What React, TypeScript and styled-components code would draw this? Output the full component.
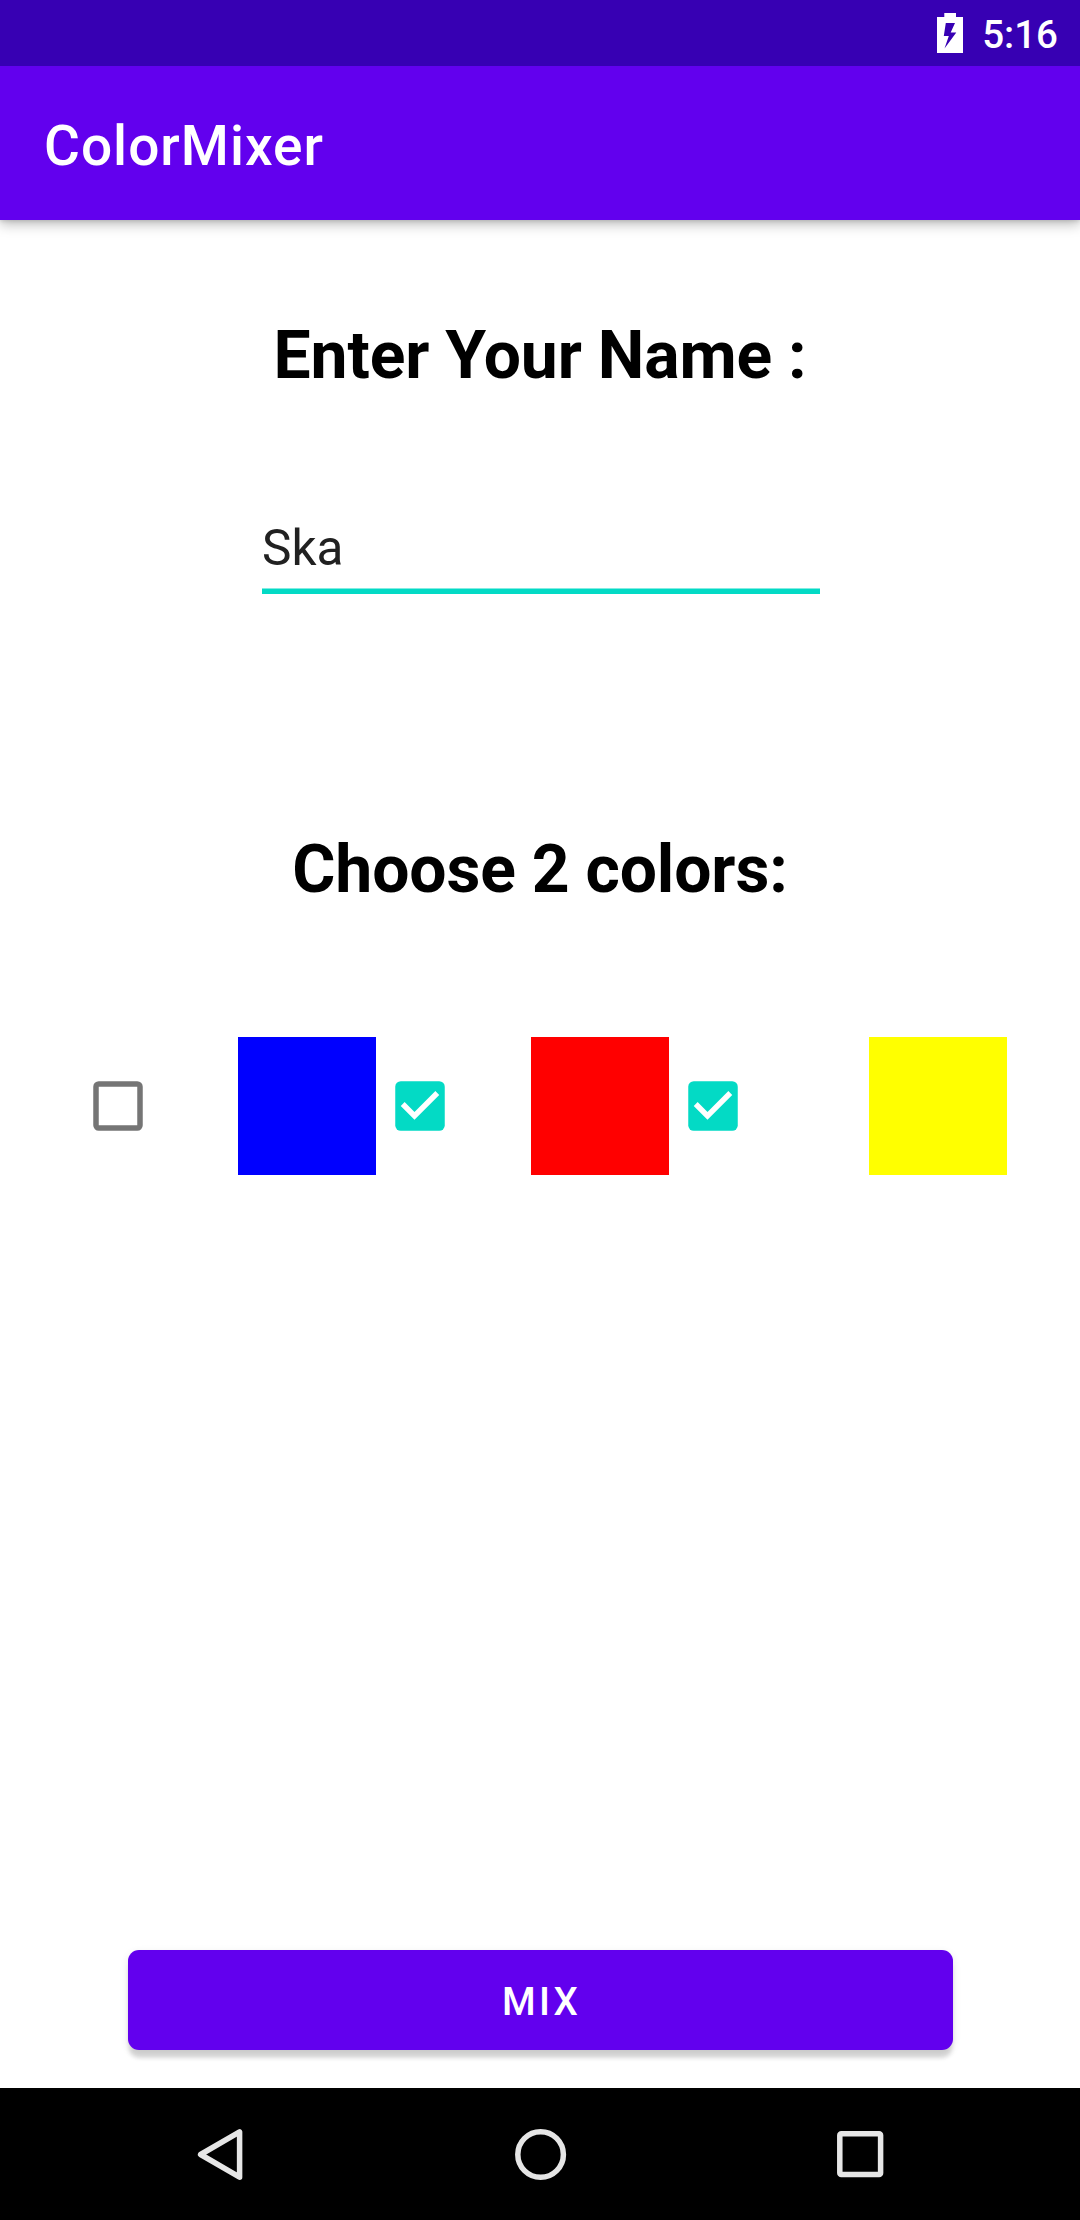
import React, { useState } from "react";
import styled, { createGlobalStyle } from "styled-components";

const GlobalStyle = createGlobalStyle`
  * { box-sizing: border-box; }
  body { margin: 0; background: #fff; }
  button, input { font-family: Roboto, sans-serif; border: 0; padding: 0; margin: 0; outline: 0; }
`;

const Screen = styled.div`
  display: flex;
  flex-direction: column;
  width: 1080px;
  height: 2220px;
  overflow: hidden;
  background: #fff;
  font-family: Roboto, sans-serif;
`;

const StatusBar = styled.header`
  display: flex;
  flex: none;
  z-index: 1;
  justify-content: flex-end;
  align-items: flex-start;
  gap: 19px;
  height: 66px;
  padding: 13px 22px 0 0;
  background: #3700b3;
`;

const BatteryIcon = styled.svg`
  display: block;
  width: 26px;
  height: 40px;
`;

const Clock = styled.time`
  font-size: 38.5px;
  font-weight: 500;
  line-height: 44px;
  color: #fff;
`;

const AppBar = styled.div`
  display: flex;
  flex: none;
  align-items: center;
  height: 154px;
  padding: 6px 44px 0;
  background: #6200ee;
  box-shadow: 0 4px 12px rgba(0, 0, 0, 0.28), 0 1px 4px rgba(0, 0, 0, 0.12);
`;

const Title = styled.h1`
  margin: 0;
  font-size: 55px;
  font-weight: 500;
  line-height: 64px;
  letter-spacing: 1px;
  color: #fff;
`;

const Content = styled.main`
  display: flex;
  flex: 1;
  flex-direction: column;
  align-items: center;
  padding-top: 97px;
`;

const Prompt = styled.h2`
  margin: 0;
  font-size: 66px;
  font-weight: 700;
  line-height: 78px;
  letter-spacing: -0.1px;
  word-spacing: -0.4px;
  color: #000;
`;

const Kern = styled.span`
  letter-spacing: -2.4px;
`;

const NameInput = styled.input`
  width: 558px;
  height: 90px;
  margin: 109px 0 237px 2px;
  padding-top: 2px;
  border-bottom: 5px solid #03dac5;
  border-radius: 0;
  background: transparent;
  box-shadow: inset 0 -1px 0 rgba(3, 218, 197, 0.5);
  font-size: 49.5px;
  line-height: 60px;
  color: #212121;
`;

const Palette = styled.div`
  display: flex;
  align-self: stretch;
  gap: 11px;
  margin-top: 128px;
  padding-left: 85px;
`;

const ColorOption = styled.div<{ $gap: number }>`
  display: flex;
  align-items: center;
  gap: ${(p) => p.$gap}px;
`;

const CheckButton = styled.button`
  display: block;
  width: 66px;
  height: 66px;
  background: transparent;

  svg {
    display: block;
    width: 66px;
    height: 66px;
  }
`;

const Swatch = styled.div<{ $color: string }>`
  width: 138px;
  height: 138px;
  background: ${(p) => p.$color};
`;

const MixButton = styled.button`
  width: 825px;
  height: 100px;
  margin: auto 0 38px 1px;
  padding: 3px 0 0 2px;
  border-radius: 11px;
  background: #6200ee;
  box-shadow: 0 9px 4px -1px rgba(0, 0, 0, 0.14), 0 3px 8px rgba(0, 0, 0, 0.1);
  font-size: 38.5px;
  font-weight: 500;
  line-height: 46px;
  letter-spacing: 3.2px;
  color: #fff;
`;

const NavBar = styled.nav`
  display: flex;
  flex: none;
  justify-content: center;
  align-items: center;
  gap: 254px;
  height: 132px;
  background: #000;
`;

const NavIcon = styled.svg`
  display: block;
  width: 66px;
  height: 66px;
  fill: none;
  stroke: #e6e6e6;
  stroke-width: 5.5;
  stroke-linejoin: round;
`;

function Checkbox({ checked, label, onToggle }: { checked: boolean; label: string; onToggle: () => void }) {
  return (
    <CheckButton role="checkbox" aria-checked={checked} aria-label={label} onClick={onToggle}>
      <svg viewBox="0 0 24 24">
        {checked ? (
          <>
            <rect x="3" y="3" width="18" height="18" rx="2" fill="#03dac5" />
            <path d="M10 17l-5-5 1.41-1.41L10 14.17l7.59-7.59L19 8z" fill="#fff" />
          </>
        ) : (
          <rect x="4" y="4" width="16" height="16" rx="1" fill="none" stroke="#757575" strokeWidth="2" />
        )}
      </svg>
    </CheckButton>
  );
}

const colors = [
  { name: "Blue", value: "#0000ff", gap: 87 },
  { name: "Red", value: "#ff0000", gap: 78 },
  { name: "Yellow", value: "#ffff00", gap: 123 },
];

export default function App() {
  const [name, setName] = useState("Ska");
  const [picked, setPicked] = useState([false, true, true]);
  const toggle = (index: number) => setPicked(picked.map((on, i) => (i === index ? !on : on)));

  return (
    <Screen>
      <GlobalStyle />
      <StatusBar>
        <BatteryIcon viewBox="0 0 26 40">
          <path
            fillRule="evenodd"
            fill="#fff"
            d="M7.3 0H19V4H26V40H0V4H7.3ZM8.8 10L6.8 23H11.8L7.5 35.5L19.3 19.5H13.7L18 10Z"
          />
        </BatteryIcon>
        <Clock>5:16</Clock>
      </StatusBar>
      <AppBar>
        <Title>ColorMixer</Title>
      </AppBar>
      <Content>
        <Prompt>
          Enter <Kern>Y</Kern>our Name :
        </Prompt>
        <NameInput aria-label="Name" value={name} onChange={(e) => setName(e.target.value)} />
        <Prompt>Choose 2 colors:</Prompt>
        <Palette>
          {colors.map((color, i) => (
            <ColorOption key={color.name} $gap={color.gap}>
              <Checkbox checked={picked[i]} label={color.name} onToggle={() => toggle(i)} />
              <Swatch $color={color.value} />
            </ColorOption>
          ))}
        </Palette>
        <MixButton>MIX</MixButton>
      </Content>
      <NavBar>
        <NavIcon viewBox="0 0 66 66">
          <path d="M52.6 10.8V56.2L13.6 33.5Z" />
        </NavIcon>
        <NavIcon viewBox="0 0 66 66">
          <circle cx="33.6" cy="33.5" r="22.8" />
        </NavIcon>
        <NavIcon viewBox="0 0 66 66">
          <rect x="12.8" y="12.8" width="40.8" height="40.8" rx="1.5" />
        </NavIcon>
      </NavBar>
    </Screen>
  );
}
